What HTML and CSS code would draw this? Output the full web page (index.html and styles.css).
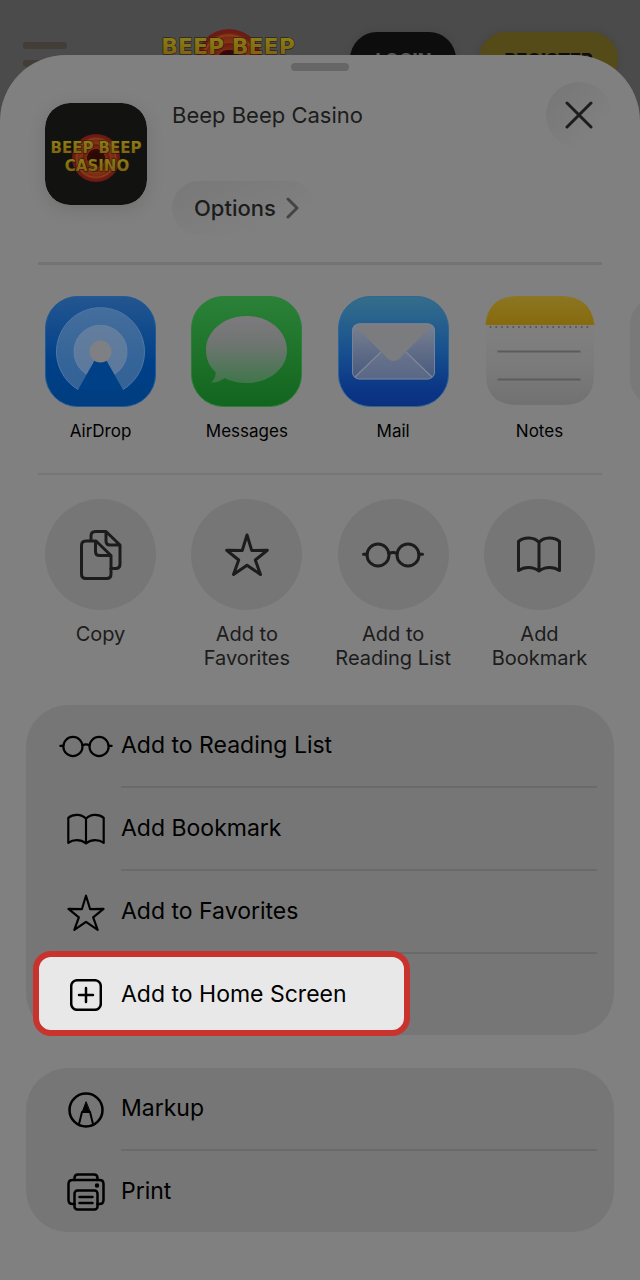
FILE: index.html
```
<!DOCTYPE html>
<html lang="en">
<head>
    <meta charset="UTF-8">
    <meta name="viewport" content="width=device-width, initial-scale=1.0">
    <title>Beep Beep Casino</title>
    <link rel="stylesheet" href="styles.css">
</head>
<body>
    <!-- shared icons and gradients -->
    <svg class="defs" width="0" height="0" aria-hidden="true">
        <defs>
            <linearGradient id="gold" x1="0" y1="0" x2="0" y2="1">
                <stop offset="0" stop-color="#8e8317"/>
                <stop offset="1" stop-color="#7d5a10"/>
            </linearGradient>
            <linearGradient id="airBg" x1="0" y1="0" x2="0" y2="1">
                <stop offset="0" stop-color="#245690"/>
                <stop offset="0.6" stop-color="#004088"/>
                <stop offset="1" stop-color="#003d80"/>
            </linearGradient>
            <linearGradient id="msgBg" x1="0" y1="0" x2="0" y2="1">
                <stop offset="0" stop-color="#2c8138"/>
                <stop offset="1" stop-color="#11651e"/>
            </linearGradient>
            <linearGradient id="bubble" x1="0" y1="0" x2="0" y2="1">
                <stop offset="0" stop-color="#7d7a7e"/>
                <stop offset="0.4" stop-color="#707572"/>
                <stop offset="1" stop-color="#40764a"/>
            </linearGradient>
            <linearGradient id="mailBg" x1="0" y1="0" x2="0" y2="1">
                <stop offset="0" stop-color="#356e8a"/>
                <stop offset="0.5" stop-color="#17508f"/>
                <stop offset="0.85" stop-color="#0b3585"/>
                <stop offset="1" stop-color="#0a3180"/>
            </linearGradient>
            <linearGradient id="envelope" x1="0" y1="0" x2="0" y2="1">
                <stop offset="0" stop-color="#7a8190"/>
                <stop offset="1" stop-color="#46587f"/>
            </linearGradient>
            <linearGradient id="flap" x1="0" y1="0" x2="0" y2="1">
                <stop offset="0" stop-color="#7c7c7e"/>
                <stop offset="1" stop-color="#7a7c80"/>
            </linearGradient>
            <linearGradient id="notesBg" x1="0" y1="0" x2="0" y2="1">
                <stop offset="0" stop-color="#808080"/>
                <stop offset="0.5" stop-color="#7b7b7b"/>
                <stop offset="1" stop-color="#717171"/>
            </linearGradient>
            <linearGradient id="notesTop" x1="0" y1="0" x2="0" y2="1">
                <stop offset="0" stop-color="#8c7624"/>
                <stop offset="1" stop-color="#866a0c"/>
            </linearGradient>
            <radialGradient id="disc">
                <stop offset="0" stop-color="#2a0606"/>
                <stop offset="0.36" stop-color="#330a06"/>
                <stop offset="0.38" stop-color="#7a2a14"/>
                <stop offset="0.56" stop-color="#6c1c10"/>
                <stop offset="0.58" stop-color="#823516"/>
                <stop offset="0.76" stop-color="#7a2913"/>
                <stop offset="0.8" stop-color="#8a421a"/>
                <stop offset="0.88" stop-color="#6f1d13"/>
                <stop offset="1" stop-color="#6b1914"/>
            </radialGradient>
        </defs>
        <symbol id="glasses" viewBox="0 0 62 26">
            <circle cx="16" cy="13" r="11"/>
            <circle cx="46" cy="13" r="11"/>
            <path d="M27 11.5q4-2 8 0M5 12.2H1.5M57 12.2h3.500"/>
        </symbol>
        <symbol id="book" viewBox="0 0 44 38">
            <path d="M22 6.500C17 .8 7 .8 1.500 5.500v29c5.500-4 14-4.500 20.500.5 6.500-5 15-4.500 20.500-.5v-29C37 .8 27 .8 22 6.500zM22 6.500V35"/>
        </symbol>
        <symbol id="star" viewBox="0 0 44 44">
            <path d="M22 2l4.800 15.600L42.300 17.300 30.300 27 35.500 41.500 22 32.200 8.500 41.500 13.700 27 1.700 17.300l15.500.3z"/>
        </symbol>
    </svg>

    <header class="site-header">
        <button class="menu-btn" aria-label="Menu">
            <span></span>
            <span></span>
            <span></span>
        </button>
        <svg class="site-logo" width="140" height="70" viewBox="0 0 140 70" role="img" aria-label="Beep Beep Casino">
            <circle cx="71" cy="35" r="33" fill="url(#disc)"/>
            <text x="70" y="27" class="logo-text logo-big">BEEP BEEP</text>
        </svg>
        <div class="header-actions">
            <button class="pill pill-dark">LOGIN</button>
            <button class="pill pill-gold">REGISTER</button>
        </div>
    </header>

    <main class="sheet">
        <div class="handle"></div>

        <section class="sheet-head">
            <svg class="app-logo" width="102" height="102" viewBox="0 0 102 102" role="img" aria-label="Beep Beep Casino">
                <rect width="102" height="102" rx="25" fill="#121210"/>
                <circle cx="51" cy="55" r="24" fill="url(#disc)"/>
                <text x="51" y="50" class="logo-text">BEEP BEEP</text>
                <text x="52" y="68" class="logo-text">CASINO</text>
            </svg>
            <div class="head-info">
                <h1>Beep Beep Casino</h1>
                <button class="options-btn">
                    Options
                    <svg width="14" height="22" viewBox="0 0 14 22"><path d="M2 2l9 9-9 9"/></svg>
                </button>
            </div>
            <button class="close-btn" aria-label="Close">
                <svg width="28" height="28" viewBox="0 0 28 28"><path d="M2 2l24 24M26 2L2 26"/></svg>
            </button>
        </section>

        <section class="tiles apps">
            <button class="tile">
                <svg width="111" height="111" viewBox="0 0 111 111">
                    <rect x="0.500" y="0.500" width="110" height="110" rx="32" fill="url(#airBg)" stroke="#205a98"/>
                    <path d="M33 93.500A44 44 0 1 1 78 93.500L55.500 55.500z" fill="#7690ad" fill-opacity="0.45" stroke="#4b78a8"/>
                    <path d="M42 78.500A26.500 26.500 0 1 1 69 78.500L55.500 55.500z" fill="#8590a0" fill-opacity="0.5" stroke="#6482a5"/>
                    <path d="M33 93.500L51 62h9l18 31.500z" fill="#004086"/>
                    <circle cx="55.500" cy="55.500" r="11" fill="#7e8084"/>
                </svg>
                <span>AirDrop</span>
            </button>
            <button class="tile">
                <svg width="111" height="111" viewBox="0 0 111 111">
                    <rect x="0.500" y="0.500" width="110" height="110" rx="32" fill="url(#msgBg)" stroke="#2b8038"/>
                    <path d="M55.500 20C33 20 15 35 15 54c0 10 4 17 9.500 22 1 4-1.500 8-4.500 10.500 5 .5 10-1.500 13.500-4.500 6.500 3.500 14 5 22 5C78 87 96 73 96 54S78 20 55.500 20z" fill="url(#bubble)"/>
                </svg>
                <span>Messages</span>
            </button>
            <button class="tile">
                <svg width="111" height="111" viewBox="0 0 111 111">
                    <rect x="0.500" y="0.500" width="110" height="110" rx="32" fill="url(#mailBg)" stroke="#2c6598"/>
                    <rect x="14" y="27.500" width="83" height="56" rx="7" fill="url(#envelope)"/>
                    <path d="M17 81l26-25q12 14 25 0l26 25q-2 2-5 2H21q-3 0-4-2z" fill="#7c8496" fill-opacity="0.35"/>
                    <path d="M17 81l26-25M94 81L68 56" fill="none" stroke="#7f8796" stroke-width="1.200"/>
                    <path d="M17 29.500q2-2 5-2h67q3 0 5 2L61.500 62.500q-6 5-12 0z" fill="url(#flap)"/>
                    <rect x="14.500" y="28" width="82" height="55" rx="7" fill="none" stroke="#75839a"/>
                </svg>
                <span>Mail</span>
            </button>
            <button class="tile">
                <svg width="111" height="111" viewBox="0 0 111 111">
                    <path d="M2 28h108v50q0 31-31 31H33Q2 109 2 78z" fill="url(#notesBg)"/>
                    <path d="M1.500 29Q4 0 34 0h43q30 0 33.500 29z" fill="url(#notesTop)"/>
                    <path d="M6.500 31h100" stroke="#555" stroke-width="2" stroke-linecap="round" stroke-dasharray="0 5.700"/>
                    <path d="M13.500 55.500h83M13.500 83.500h83" stroke="#5c5c5c" stroke-width="2"/>
                </svg>
                <span>Notes</span>
            </button>
            <button class="tile" aria-label="More apps">
                <svg width="111" height="111" viewBox="0 0 111 111"><rect width="111" height="111" rx="29" fill="#797979"/></svg>
            </button>
        </section>

        <section class="tiles actions">
            <button class="tile">
                <i><svg class="line" width="42" height="50" viewBox="0 0 42 50">
                    <path d="M11 10.500V6q0-4.500 4.500-4.500H26L40 15v19q0 4.500-4.500 4.500h-4.500M26 1.500V11q0 4 4 4h10"/>
                    <path d="M16 11H6q-4.500 0-4.500 4.500V44q0 4.500 4.500 4.500h20.500q4.500 0 4.500-4.500V25.500zM15.500 11v10.500q0 4 4 4h11.500"/>
                </svg></i>
                <span>Copy</span>
            </button>
            <button class="tile">
                <i><svg class="line" width="44" height="44"><use href="#star"/></svg></i>
                <span>Add to<br>Favorites</span>
            </button>
            <button class="tile">
                <i><svg class="line" width="62" height="26"><use href="#glasses"/></svg></i>
                <span>Add to<br>Reading List</span>
            </button>
            <button class="tile">
                <i><svg class="line" width="44" height="38"><use href="#book"/></svg></i>
                <span>Add<br>Bookmark</span>
            </button>
        </section>

        <section class="card">
            <button class="row">
                <i><svg class="line" width="54" height="23"><use href="#glasses"/></svg></i>
                <span>Add to Reading List</span>
            </button>
            <button class="row">
                <i><svg class="line" width="38" height="33"><use href="#book"/></svg></i>
                <span>Add Bookmark</span>
            </button>
            <button class="row">
                <i><svg class="line" width="38" height="38"><use href="#star"/></svg></i>
                <span>Add to Favorites</span>
            </button>
            <button class="row highlight">
                <i><svg class="line" width="32" height="32" viewBox="0 0 32 32">
                    <rect x="1.200" y="1.200" width="29.600" height="29.600" rx="6"/>
                    <path d="M16 9v14M9 16h14"/>
                </svg></i>
                <span>Add to Home Screen</span>
            </button>
        </section>

        <section class="card">
            <button class="row">
                <i><svg class="line" width="36" height="36" viewBox="0 0 36 36">
                    <circle cx="18" cy="18" r="16.500"/>
                    <path d="M11 32l3-12h8l3 12" stroke-width="2"/>
                    <path d="M18 10l-4 10.500h8z" fill="#000" stroke-width="1"/>
                </svg></i>
                <span>Markup</span>
            </button>
            <button class="row">
                <i><svg class="line" width="38" height="38" viewBox="0 0 38 38">
                    <path d="M7.500 7V5q0-3.500 3.500-3.500h16q3.500 0 3.500 3.500v2"/>
                    <path d="M7.500 31H5.500q-4 0-4-4V11q0-4 4-4h27q4 0 4 4v16q0 4-4 4h-2"/>
                    <rect x="7.500" y="17.500" width="23" height="19" rx="3"/>
                    <path d="M12.500 24h13M12.500 30h13"/>
                    <circle cx="30" cy="12.500" r="1" fill="#000"/>
                </svg></i>
                <span>Print</span>
            </button>
        </section>
    </main>
</body>
</html>
```
FILE: styles.css
```
* {
    box-sizing: border-box;
}

body {
    margin: 0;
    min-height: 100vh;
    display: flex;
    flex-direction: column;
    overflow-x: hidden;
    font-family: Inter, "Liberation Sans", sans-serif;
    background: #4b4b4b;
    color: #000;
}

button {
    border: none;
    padding: 0;
    background: none;
    color: inherit;
    font-family: inherit;
    cursor: pointer;
}

i {
    display: flex;
    justify-content: center;
    align-items: center;
    flex-shrink: 0;
}

.defs {
    position: absolute;
}

.line {
    fill: none;
    stroke: currentColor;
    stroke-width: 2.5px;
    stroke-linecap: round;
    stroke-linejoin: round;
}

/* site behind the sheet */
.site-header {
    height: 125px;
    padding: 27px 22px 0 23px;
    display: flex;
    align-items: flex-start;
}

.menu-btn {
    display: flex;
    flex-direction: column;
    gap: 11px;
    width: 44px;
    margin-top: 15px;
}

.menu-btn span {
    height: 7px;
    border-radius: 3px;
    background: #423e37;
}

.site-logo {
    margin: 0 auto 0 91px;
}

.logo-text {
    font-family: "DejaVu Sans", sans-serif;
    font-size: 15px;
    font-weight: 700;
    text-anchor: middle;
    fill: url(#gold);
    stroke: #1d1607;
    stroke-width: 1px;
    paint-order: stroke;
}

.logo-big {
    font-size: 22px;
}

.header-actions {
    display: flex;
    gap: 23px;
    margin-top: 5px;
}

.pill {
    height: 54px;
    padding: 0 25px;
    border-radius: 27px;
    font-size: 18px;
    font-weight: 800;
    box-shadow: 0 0 8px rgba(0, 0, 0, 0.1);
}

.pill-dark {
    background: #0d0d0d;
    color: #555;
}

.pill-gold {
    background: #544b18;
    color: #0d0d0d;
}

/* share sheet */
.sheet {
    flex: 1;
    margin-top: -70px;
    padding: 8px 26px 47px;
    border-radius: 66px 66px 0 0;
    background: #808080;
    overflow: hidden;
    z-index: 1;
}

.handle {
    width: 58px;
    height: 8px;
    margin: 0 auto;
    border-radius: 4px;
    background: #666;
}

.sheet-head {
    display: flex;
    align-items: flex-start;
    height: 194px;
    margin: 0 12px;
    padding: 11px 0 0 7px;
    border-bottom: 3px solid #737373;
}

.app-logo {
    margin-top: 21px;
    border-radius: 25px;
    box-shadow: 0 4px 18px rgba(0, 0, 0, 0.12);
}

.head-info {
    flex: 1;
    margin: 17px 0 0 25px;
}

h1 {
    margin: 0 0 50px;
    font-size: 22px;
    line-height: 32px;
    font-weight: 400;
    color: #1c1c1c;
}

.options-btn {
    display: flex;
    align-items: center;
    gap: 10px;
    height: 54px;
    padding: 0 16px 0 22px;
    border-radius: 27px;
    font-size: 22px;
    font-weight: 500;
    color: #1c1c1c;
    background: linear-gradient(160deg, #787878, #808080 75%);
}

.options-btn svg {
    fill: none;
    stroke: #444;
    stroke-width: 3px;
    stroke-linecap: round;
    stroke-linejoin: round;
}

.close-btn {
    display: flex;
    align-items: center;
    justify-content: center;
    width: 66px;
    height: 66px;
    margin-right: -10px;
    border-radius: 50%;
    background: linear-gradient(135deg, #767676, #808080 75%);
}

.close-btn svg {
    stroke: #1c1c1c;
    stroke-width: 3px;
    stroke-linecap: round;
}

.tiles {
    display: flex;
    gap: calc((100% - 444px) / 3);
    margin: 0 12px;
    padding: 0 7px;
}

.tile {
    display: flex;
    flex-direction: column;
    align-items: center;
    flex: 0 0 111px;
    min-width: 0;
    white-space: nowrap;
}

.apps {
    height: 210px;
    padding-top: 31px;
    border-bottom: 2px solid #767676;
}

.apps span {
    margin-top: 12px;
    font-size: 17px;
    line-height: 24px;
}

.actions {
    height: 206px;
    padding-top: 24px;
    margin-bottom: 24px;
    color: #1c1c1c;
}

.actions i {
    width: 111px;
    height: 111px;
    border-radius: 50%;
    background: #767676;
}

.actions .line {
    stroke-width: 3px;
}

.actions span {
    margin-top: 12px;
    font-size: 20px;
    line-height: 24px;
}

/* action lists */
.card {
    margin-bottom: 33px;
    border-radius: 42px;
    background: #767676;
}

.card:last-child {
    margin-bottom: 0;
}

.row {
    position: relative;
    display: flex;
    align-items: center;
    width: 100%;
    padding-left: 33px;
    font-size: 23px;
    text-align: left;
}

.row i {
    position: relative;
    width: 54px;
}

.row span {
    position: relative;
    flex: 1;
    height: 83px;
    margin: 0 17px 0 8px;
    line-height: 81px;
    border-bottom: 2px solid #6a6a6a;
}

.row:last-child span {
    height: 81px;
    border-bottom: none;
}

/* ring round the row to tap */
.highlight::before {
    content: "";
    position: absolute;
    top: -3px;
    bottom: -1px;
    left: 7px;
    width: 365px;
    border: 6px solid #c8332d;
    border-radius: 18px;
    background: #e8e8e8;
}
```
